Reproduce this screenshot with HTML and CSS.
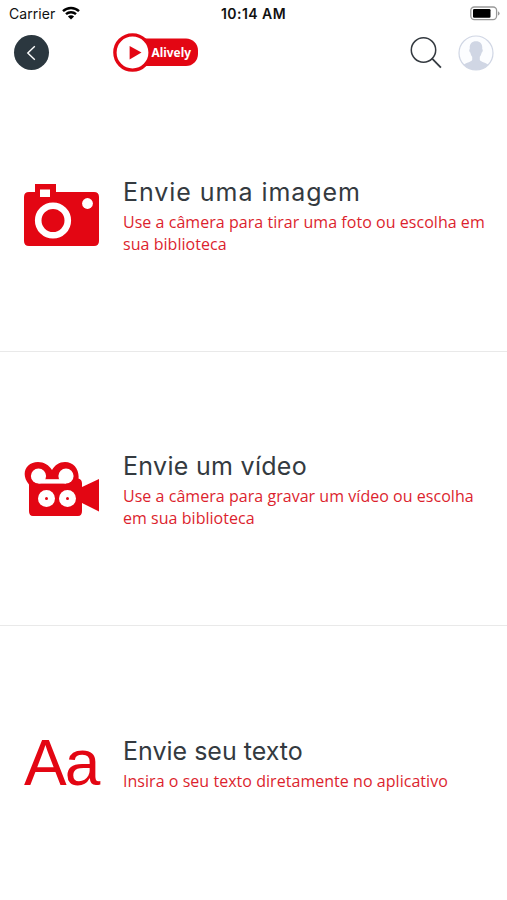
FILE: index.html
```html
<!DOCTYPE html>
<html lang="pt-BR">
<head>
    <meta charset="UTF-8">
    <meta name="viewport" content="width=device-width, initial-scale=1.0">
    <title>Alively</title>
    <link rel="stylesheet" href="styles.css">
</head>
<body>
    <div class="statusbar">
        <div class="carrier">
            <span>Carrier</span>
            <svg class="wifi" width="18" height="14" viewBox="0 0 18 14">
                <path d="M1 5.2a11.5 11.5 0 0 1 16 0M4 8.2a7.2 7.2 0 0 1 10 0" fill="none" stroke="#000" stroke-width="2.4"/>
                <path d="M9 13.6L5.9 10.5a4.4 4.4 0 0 1 6.2 0z"/>
            </svg>
        </div>
        <div class="clock">10:14 AM</div>
        <svg class="battery" width="30" height="15" viewBox="0 0 30 15">
            <rect x="0.8" y="1" width="25.8" height="12.6" rx="3.5" fill="#fff" stroke="#999" stroke-width="1.3"/>
            <rect x="3" y="3" width="17.5" height="8.8" rx="1.2"/>
            <path d="M28 5.2v4.4q1.6-.7 1.6-2.2T28 5.2z" fill="#999"/>
        </svg>
    </div>

    <header class="header">
        <button class="back" aria-label="Voltar">
            <svg width="35" height="35" viewBox="0 0 35 35">
                <path d="M20.8 11.2l-7 6.8 7 6.8" fill="none" stroke="#fff" stroke-width="1.4"/>
            </svg>
        </button>
        <svg class="logo" width="86" height="40" viewBox="0 0 86 40">
            <rect x="20" y="5.500" width="65" height="27.500" rx="12" fill="#e30613"/>
            <circle cx="19.500" cy="19.500" r="17.600" fill="#fff" stroke="#e30613" stroke-width="3.400"/>
            <path d="M16.600 13v13.400L28.500 19.600z" fill="#e30613"/>
            <text class="logo-text" x="38.500" y="23.500" textLength="39.500" lengthAdjust="spacingAndGlyphs">Alively</text>
        </svg>
        <div class="tools">
            <svg width="32" height="32" viewBox="0 0 32 32">
                <circle cx="13.500" cy="13" r="12.200" fill="none" stroke="#343a40" stroke-width="1.500"/>
                <path d="M21.900 21.400l9 9.200" stroke="#343a40" stroke-width="1.800"/>
            </svg>
            <svg width="36" height="36" viewBox="0 0 36 36">
                <clipPath id="round"><circle cx="18" cy="18" r="17"/></clipPath>
                <circle cx="18" cy="18" r="17" fill="#fcfdff" stroke="#d0d6e4" stroke-width="1.2"/>
                <path clip-path="url(#round)" fill="#d0d6e4" d="M18 6.2c4.6 0 6.7 3 6.2 7.8.9.2.7 2.6-.5 3.6-.4 2-1 3.2-1.9 4.2v3.2c1 2.2 7 2.4 9.2 5.6V36H5v-5.400c2.200-3.200 8.200-3.400 9.200-5.600v-3.200c-.9-1-1.500-2.200-1.900-4.200-1.200-1-1.400-3.400-.5-3.600-.5-4.800 1.600-7.800 6.200-7.800z"/>
            </svg>
        </div>
    </header>

    <main class="options">
        <section class="option">
            <svg class="icon" width="76" height="64" viewBox="0 0 76 64">
                <path fill="#e30613" d="M11 8V0h21v8h38q5 0 5 5v44q0 5-5 5H5q-5 0-5-5V13q0-5 5-5z"/>
                <rect x="16" y="5.500" width="10" height="7.500" fill="#fff"/>
                <circle cx="29" cy="36.500" r="14.800" fill="none" stroke="#fff" stroke-width="6.600"/>
                <circle cx="63.500" cy="19.500" r="5.400" fill="#fff"/>
            </svg>
            <div class="text">
                <h2 class="title title-image">Envie uma imagem</h2>
                <p class="desc">Use a câmera para tirar uma foto ou escolha em<br>sua biblioteca</p>
            </div>
        </section>
        <section class="option">
            <svg class="icon" width="76" height="56" viewBox="0 0 76 56">
                <path fill="#e30613" d="M5 22.500C-4 12 2 0 14 0c6 0 11 3 14 8 3-5 7-8 13-8 9 0 14.500 8 13.500 16.500q3.500 1 3.500 5V25l17-8v32.500L58 41v8q0 5-4 5H9q-4 0-4-5z"/>
                <circle cx="14.500" cy="14" r="7.600" fill="#fff"/>
                <circle cx="42" cy="14" r="7.600" fill="#fff"/>
                <rect x="14.500" y="17.200" width="27.500" height="4.400" fill="#fff"/>
                <circle cx="22.500" cy="36.500" r="8.500" fill="#fff"/>
                <circle cx="43.500" cy="36.500" r="8.500" fill="#fff"/>
                <circle cx="22.500" cy="36.500" r="1.500" fill="#e30613"/>
                <circle cx="43.500" cy="36.500" r="1.500" fill="#e30613"/>
            </svg>
            <div class="text">
                <h2 class="title title-video">Envie um vídeo</h2>
                <p class="desc">Use a câmera para gravar um vídeo ou escolha<br>em sua biblioteca</p>
            </div>
        </section>
        <section class="option option-text">
            <div class="icon letters">Aa</div>
            <div class="text">
                <h2 class="title">Envie seu texto</h2>
                <p class="desc">Insira o seu texto diretamente no aplicativo</p>
            </div>
        </section>
    </main>
</body>
</html>
```
FILE: styles.css
```css
* {
    box-sizing: border-box;
}
body {
    margin: 0;
    height: 900px;
    background: #fff;
    font-family: "Open Sans", "Noto Sans", sans-serif;
    overflow: hidden;
}
.statusbar {
    display: grid;
    grid-template-columns: 1fr auto 1fr;
    align-items: center;
    height: 27px;
    padding: 0 7px 0 9px;
    font-family: Inter, sans-serif;
    font-size: 14px;
    color: #111;
}
.carrier {
    display: flex;
    align-items: center;
    gap: 7px;
    letter-spacing: 0.05px;
}
.wifi {
    margin-top: -2px;
}
.clock {
    padding-right: 2px;
    font-weight: 600;
    letter-spacing: 0.45px;
}
.battery {
    justify-self: end;
}
.header {
    display: flex;
    align-items: center;
    height: 51px;
    padding: 0 13px 0 14px;
}
.back {
    width: 35px;
    height: 35px;
    padding: 0;
    border: none;
    border-radius: 50%;
    background: #2b373f;
}
.logo {
    margin-left: 64px;
}
.logo-text {
    font-family: "Noto Sans", sans-serif;
    font-size: 13px;
    font-weight: 700;
    fill: #fff;
}
.tools {
    display: flex;
    align-items: center;
    gap: 16px;
    margin-left: auto;
}
.option {
    display: flex;
    align-items: center;
    gap: 23px;
    height: 274px;
    padding-left: 24px;
    border-bottom: 1px solid #e9e9e9;
}
.option-text {
    border-bottom: none;
}
.icon {
    flex: none;
    width: 76px;
    margin-top: 3px;
}
.letters {
    font-family: "Liberation Sans", Arial, sans-serif;
    font-size: 64px;
    line-height: 74px;
    letter-spacing: -2px;
    margin-top: 0;
    color: #e30613;
}
.title {
    margin: 0;
    font-family: Inter, sans-serif;
    font-size: 25px;
    font-weight: 400;
    line-height: 36px;
    color: #343a40;
    white-space: nowrap;
}
.title-image {
    letter-spacing: 0.95px;
}
.title-video {
    letter-spacing: 0.3px;
}
.desc {
    margin: 1px 0;
    font-size: 16px;
    line-height: 22px;
    letter-spacing: 0.04px;
    color: #dc1f2e;
    white-space: nowrap;
}
```
